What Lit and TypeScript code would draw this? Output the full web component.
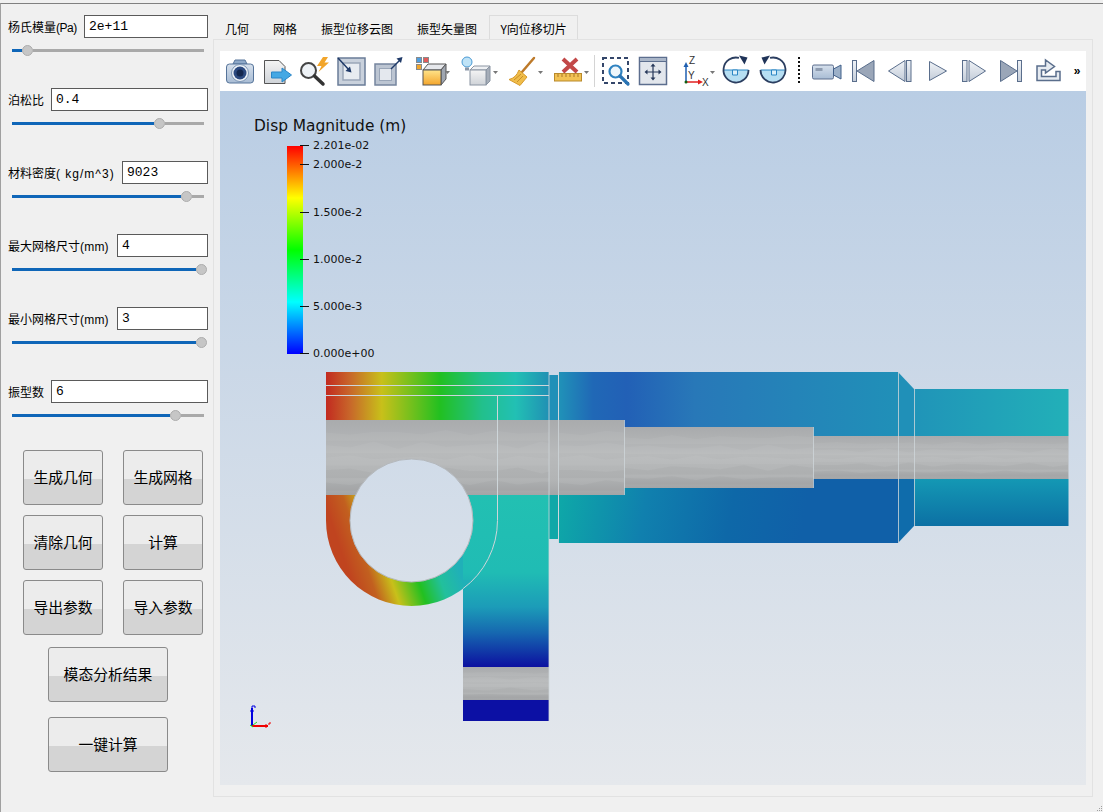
import { LitElement, css, html, svg } from "lit";
import { customElement } from "lit/decorators.js";

interface Param {
  label: string;
  unit: string;
  // the latin part of the labels is not evenly spaced in the reference
  unitSpacing: number;
  value: string;
  inputWidth: number;
  // slider thumb centre, measured from the left end of the 192px track
  thumb: number;
}

const PARAMS: Param[] = [
  { label: "杨氏模量", unit: "(Pa)", unitSpacing: -0.5, value: "2e+11", inputWidth: 124, thumb: 15 },
  { label: "泊松比", unit: "", unitSpacing: 0, value: "0.4", inputWidth: 157, thumb: 147 },
  { label: "材料密度", unit: "( kg/m^3)", unitSpacing: 1, value: "9023", inputWidth: 86, thumb: 174 },
  { label: "最大网格尺寸", unit: "(mm)", unitSpacing: 0.2, value: "4", inputWidth: 91, thumb: 189 },
  { label: "最小网格尺寸", unit: "(mm)", unitSpacing: 0.2, value: "3", inputWidth: 91, thumb: 189 },
  { label: "振型数", unit: "", unitSpacing: 0, value: "6", inputWidth: 157, thumb: 163 },
];

const TABS = ["几何", "网格", "振型位移云图", "振型矢量图", "Y向位移切片"];

const caret = svg`<path d="M38 20h5l-2.500 3z" fill="#777" />`;
const steel = "url(#steel)";
const line = "#5a6e8c";

const cwIcon = svg`
  <path d="M5.500 19A12.500 12.500 0 0 0 30.500 19Z" fill="#b6def2" />
  <path d="M5.500 19H30.500" stroke="#2a86c4" />
  <path d="M14.500 19h5v5h-5z" fill="#dcf0fa" stroke="#2a86c4" />
  <path d="M30.500 19A12.500 12.500 0 1 1 21 6.900" fill="none" stroke="#2b3e60" stroke-width="1.800" />
  <path d="M21 4.500L29.500 6.500L26.500 13.500Z" fill="#1f3358" />`;

const TOOLS: { w: number; icon: unknown }[] = [
  {
    w: 37,
    icon: svg`
      <path d="M11 13l2-4h10l2 4z" fill="#8fa9c8" stroke="#56749a" />
      <rect x="4.500" y="13" width="27" height="19" rx="3" fill="url(#pale)" stroke="#56749a" />
      <circle cx="18" cy="22" r="8.500" fill="#eef3f8" stroke="#7d96b5" />
      <circle cx="18" cy="22" r="6.500" fill="#2c4a80" />
      <circle cx="18" cy="22" r="3.500" fill="#14284f" />`,
  },
  {
    w: 37,
    icon: svg`
      <path d="M5.500 9.500H20L26 15.500V32.500H5.500Z" fill="url(#sheet)" stroke="#555" />
      <path d="M12.500 21H23V17L32.500 24L23 31V27H12.500Z" fill="#45a8e4" stroke="#2b86c8" />`,
  },
  {
    w: 37,
    icon: svg`
      <circle cx="12.500" cy="19.500" r="7.500" fill="#eef2f6" stroke="#444" stroke-width="2" />
      <path d="M18.500 25L27 33" stroke="#333" stroke-width="3.500" stroke-linecap="round" />
      <path d="M27 6L21 15H25.500L22.500 21L33 11.500H28.500L32 6Z" fill="#f2a52a" />`,
  },
  {
    w: 37,
    icon: svg`
      <rect x="5" y="7" width="27" height="27" fill="#c9d1dc" stroke="#6a7c98" stroke-width="1.500" />
      <rect x="10" y="12" width="17" height="17" fill="#e8ecf1" stroke="#9aa6b8" stroke-width="1.500" />
      <path d="M5 7L17 20" stroke="#1f3a68" stroke-width="1.500" />
      <path d="M18.500 21.500l-6-1.500 4.500-4.500z" fill="#1f3a68" />`,
  },
  {
    w: 37,
    icon: svg`
      <rect x="5" y="13" width="21" height="21" fill="#bcc5d2" stroke="#76859e" stroke-width="1.500" />
      <rect x="9.500" y="17.500" width="12" height="12" fill="#e4e8ee" stroke="#9aa6b8" />
      <path d="M21 18L30 9" stroke="#1f3a68" stroke-width="1.500" />
      <path d="M32.500 6l-1.500 6-4.500-4.500z" fill="#1f3a68" />`,
  },
  {
    w: 48,
    icon: svg`
      <rect x="9.500" y="6.500" width="5" height="5" fill="#4f9fe0" stroke="#8a8a8a" />
      <rect x="16.500" y="6.500" width="5" height="5" fill="#e25a5a" stroke="#8a8a8a" />
      <rect x="9.500" y="13.500" width="5" height="5" fill="#f2a62c" stroke="#8a8a8a" />
      <path d="M16 19l5-6h18l-5 6z" fill="#e6e8ec" stroke="#555" />
      <path d="M34 19l5-6v15l-5 6z" fill="#9fa6b0" stroke="#555" />
      <rect x="16" y="19" width="18" height="15" fill="url(#amber)" stroke="#555" />
      ${caret}`,
  },
  {
    w: 45,
    icon: svg`
      <circle cx="12" cy="11" r="5" fill="#bfe3f7" stroke="#4a9ad4" />
      <path d="M10 16.500h4v3h-4z" fill="#8a97a8" />
      <path d="M15 19l4-4h16l-4 4z" fill="#eef0f3" stroke="#8a94a2" />
      <path d="M31 19l4-4v15l-4 4z" fill="#a5adb8" stroke="#8a94a2" />
      <rect x="15" y="19" width="16" height="15" fill="url(#sheet)" stroke="#8a94a2" />
      ${caret}`,
  },
  {
    w: 46,
    icon: svg`
      <path d="M34 7L22 21" stroke="#bd7a2a" stroke-width="2.500" stroke-linecap="round" />
      <path d="M19 19L27 26L20 34.500L9 28.500Q16 27 19 19Z" fill="#f0bd4a" stroke="#d69a2e" />
      <path d="M21 23L14 29M23 25L17 31" stroke="#c98f28" />
      ${caret}`,
  },
  {
    w: 46,
    icon: svg`
      <path d="M17 8L31 21M31 8L17 21" stroke="#c24848" stroke-width="4" />
      <rect x="8.500" y="22.500" width="27" height="7.500" fill="#f2c253" stroke="#b98a2c" />
      <path d="M12 23v3M16 23v3M20 23v3M24 23v3M28 23v3M32 23v3" stroke="#a9782a" />
      ${caret}`,
  },
  { w: 4, icon: svg`<path d="M2.500 4V36" stroke="#d4d4d4" />` },
  {
    w: 38,
    icon: svg`
      <rect x="7" y="7" width="25" height="25" fill="none" stroke="#34466a" stroke-width="2" stroke-dasharray="4 3" />
      <circle cx="19.500" cy="20.500" r="6" fill="#eef6fb" stroke="#2f82c0" stroke-width="2.200" />
      <path d="M24 25L32 33" stroke="#2a74b4" stroke-width="3.200" stroke-linecap="round" />`,
  },
  {
    w: 38,
    icon: svg`
      <rect x="5.500" y="6.500" width="27" height="27" fill="#e2e6ec" stroke="#5c6e8e" stroke-width="1.500" />
      <rect x="5.500" y="6.500" width="27" height="4" fill="#aab6c8" stroke="#5c6e8e" />
      <path d="M19 14v14M12 21h14" stroke="#26385a" stroke-width="1.200" />
      <path d="M19 12.500l-2.500 3h5zM19 29.500l-2.500-3h5zM10.500 21l3-2.500v5zM27.500 21l-3-2.500v5z" fill="#26385a" />`,
  },
  {
    w: 46,
    icon: svg`
      <path d="M14 31V13" stroke="#1f5fb0" stroke-width="1.500" />
      <path d="M14 11l-2.500 5h5z" fill="#1f5fb0" />
      <path d="M14 31H28" stroke="#e02020" stroke-width="1.500" />
      <path d="M31 31l-5-2.500v5z" fill="#e02020" />
      <circle cx="14" cy="31" r="1.500" fill="#106010" />
      <text x="17" y="13" class="axis">Z</text>
      <text x="16" y="28" class="axis">Y</text>
      <text x="30" y="35" class="axis">X</text>
      ${caret}`,
  },
  { w: 37, icon: cwIcon },
  { w: 37, icon: svg`<g transform="translate(36 0) scale(-1 1)">${cwIcon}</g>` },
  { w: 14, icon: svg`<path d="M7 6V34" stroke="#111" stroke-width="2" stroke-dasharray="2 2" />` },
  {
    w: 40,
    icon: svg`
      <rect x="6.500" y="14" width="21" height="14" rx="1.500" fill="url(#pale)" stroke="#5c6e8e" />
      <rect x="9.500" y="17" width="7" height="3" fill="#8e9cb0" />
      <path d="M27.500 18L35 14V28L27.500 24Z" fill="#9cb0c8" stroke="#41608a" />`,
  },
  {
    w: 36,
    icon: svg`
      <rect x="6.500" y="9.500" width="4" height="21" fill="${steel}" stroke="${line}" />
      <path d="M28 9.500V30.500L11 20Z" fill="#9aa6b8" stroke="${line}" />`,
  },
  {
    w: 36,
    icon: svg`
      <path d="M23 9.500V30.500L6.500 20Z" fill="${steel}" stroke="${line}" />
      <rect x="24.500" y="9.500" width="4.500" height="21" fill="${steel}" stroke="${line}" />`,
  },
  { w: 38, icon: svg`<path d="M11.500 10.500V29.500L28.500 20Z" fill="${steel}" stroke="${line}" />` },
  {
    w: 36,
    icon: svg`
      <rect x="6.500" y="9.500" width="4.500" height="21" fill="${steel}" stroke="${line}" />
      <path d="M13 9.500V30.500L29.500 20Z" fill="${steel}" stroke="${line}" />`,
  },
  {
    w: 38,
    icon: svg`
      <path d="M8.500 9.500V30.500L25 20Z" fill="#9aa6b8" stroke="${line}" />
      <rect x="25.500" y="9.500" width="4" height="21" fill="${steel}" stroke="${line}" />`,
  },
  {
    w: 38,
    icon: svg`
      <path d="M7 29.500V15H15.500V9L24.500 15.500L15.500 22V19H11.500V25.500H26V20.500H30V29.500Z" fill="#e6ebf1" stroke="${line}" stroke-width="1.500" />`,
  },
];

// a few pale zigzag bands, stands in for the mesh facets on the cut section
function facets(x0: number, x1: number, y0: number, y1: number) {
  const rows = 5;
  const out = [];
  for (let r = 0; r < rows; r++) {
    const base = y0 + ((y1 - y0) * (r + 1)) / (rows + 1);
    const amp = (y1 - y0) * (r % 2 ? 0.05 : 0.035);
    let top = `M${x0} ${base}`;
    for (let x = x0 + 24; x < x1; x += 24) {
      const w = Math.sin(x * 0.11 + r * 1.7) * amp;
      top += `L${x} ${(base + w).toFixed(1)}`;
    }
    top += `L${x1} ${base}V${base + (y1 - y0) / 9}H${x0}Z`;
    out.push(
      svg`<path d=${top} fill=${r < 3 ? "#fff" : "#000"} opacity=${r < 3 ? 0.045 : 0.025} />`
    );
  }
  return out;
}

const TICKS: [number, string][] = [
  [145, "2.201e-02"],
  [164, "2.000e-2"],
  [212, "1.500e-2"],
  [259, "1.000e-2"],
  [306, "5.000e-3"],
  [353, "0.000e+00"],
];

@customElement("app-root")
export class AppRoot extends LitElement {
  static styles = css`
    :host {
      display: block;
      width: 1103px;
      height: 812px;
      background: #f0f0f0;
      font-family: "Liberation Sans", "Noto Sans CJK SC", sans-serif;
      color: #000;
      overflow: hidden;
    }
    .window {
      box-sizing: border-box;
      display: flex;
      height: 809px;
      margin-top: 3px;
      border-top: 1px solid #808080;
      border-left: 1px solid #a0a0a0;
    }
    .side {
      box-sizing: border-box;
      width: 212px;
      padding: 11px 5px 0 7px;
      flex: none;
    }
    .field {
      height: 50px;
      margin-bottom: 23px;
    }
    .row {
      display: flex;
      align-items: center;
      height: 23px;
    }
    .row label {
      flex: 1;
      font-size: 12px;
      white-space: nowrap;
    }
    .row input {
      box-sizing: border-box;
      height: 23px;
      border: 1px solid #5a5a5a;
      outline: none;
      padding: 0 0 0 4px;
      background: #fff;
      font: 13px "Liberation Mono", monospace;
      color: #000;
    }
    .slider {
      display: flex;
      align-items: center;
      width: 192px;
      height: 11px;
      margin: 7px 0 0 4px;
    }
    .fill {
      height: 3px;
      background: #0f66b8;
      flex: none;
    }
    .thumb {
      box-sizing: border-box;
      width: 11px;
      height: 11px;
      border-radius: 50%;
      background: #c6c6c6;
      border: 1px solid #adadad;
      flex: none;
    }
    .rest {
      height: 3px;
      background: #a9a9a9;
      flex: 1;
    }
    .buttons {
      display: grid;
      grid-template-columns: 80px 80px;
      column-gap: 20px;
      row-gap: 10px;
      margin: -3px 0 0 15px;
    }
    .stack {
      display: flex;
      flex-direction: column;
      gap: 15px;
      margin: 12px 0 0 40px;
    }
    button {
      box-sizing: border-box;
      height: 55px;
      padding: 0 0 2px;
      border: 1px solid #8a8a8a;
      border-radius: 3px;
      background: linear-gradient(#ececec 0 52%, #d4d4d4 52%);
      font: 14.8px "Noto Sans CJK SC", sans-serif;
      color: #000;
    }
    .stack button {
      width: 120px;
    }
    .main {
      width: 880px;
      padding-top: 11px;
      flex: none;
    }
    .tabs {
      display: flex;
      height: 24px;
      font: 12px "Noto Sans CJK SC", sans-serif;
    }
    .tab {
      padding: 0 12px;
      line-height: 27px;
      white-space: nowrap;
    }
    .tab.active {
      box-sizing: border-box;
      width: 89px;
      padding: 0;
      text-align: center;
      border: 1px solid #dcdcdc;
      border-bottom: none;
      line-height: 25px;
    }
    .pane {
      box-sizing: border-box;
      height: 758px;
      padding: 11px 6px;
      border: 1px solid #e2e2e2;
      display: flex;
      flex-direction: column;
    }
    .toolbar {
      display: flex;
      align-items: center;
      height: 40px;
      padding-left: 2px;
      background: #fff;
      flex: none;
    }
    .toolbar svg {
      display: block;
      flex: none;
    }
    .axis {
      font: 10px "Liberation Sans", sans-serif;
      fill: #333;
    }
    .more {
      width: 18px;
      text-align: center;
      font: bold 12px "Liberation Sans", sans-serif;
    }
    .view {
      flex: 1;
      background: linear-gradient(#b9cde4, #e5e8ec);
    }
    .view svg {
      display: block;
    }
    .title {
      font: 15.4px "DejaVu Sans", sans-serif;
      fill: #111;
    }
    .tick {
      font: 11px "DejaVu Sans", sans-serif;
      fill: #111;
    }
    .grip {
      position: absolute;
      left: 1096px;
      top: 805px;
    }
  `;

  private _renderParam(p: Param) {
    return html`
      <div class="field">
        <div class="row">
          <label>${p.label}<span style="letter-spacing:${p.unitSpacing}px">${p.unit}</span></label>
          <input style="width:${p.inputWidth}px" .value=${p.value} />
        </div>
        <div class="slider">
          <div class="fill" style="width:${p.thumb - 5.5}px"></div>
          <div class="thumb"></div>
          <div class="rest"></div>
        </div>
      </div>
    `;
  }

  private _renderToolbar() {
    return html`
      <div class="toolbar">
        <svg width="0" height="0">
          <defs>
            <linearGradient id="steel" x1="0" y1="0" x2="0" y2="1">
              <stop offset="0" stop-color="#f0f3f7" />
              <stop offset="1" stop-color="#c3ccd8" />
            </linearGradient>
            <linearGradient id="pale" x1="0" y1="0" x2="0" y2="1">
              <stop offset="0" stop-color="#d6e0ec" />
              <stop offset="1" stop-color="#a8bcd4" />
            </linearGradient>
            <linearGradient id="sheet" x1="0" y1="0" x2="0" y2="1">
              <stop offset="0" stop-color="#f4f4f4" />
              <stop offset="1" stop-color="#cfd3d8" />
            </linearGradient>
            <linearGradient id="amber" x1="0" y1="0" x2="0" y2="1">
              <stop offset="0" stop-color="#ffe48a" />
              <stop offset="1" stop-color="#f3a52c" />
            </linearGradient>
          </defs>
        </svg>
        ${TOOLS.map(
          (t) => html`<svg width=${t.w} height="40" viewBox="0 0 ${t.w} 40">${t.icon}</svg>`
        )}
        <span class="more">»</span>
      </div>
    `;
  }

  // the model view, drawn in page coordinates
  private _renderView() {
    const edge = "#ced6da";
    return html`
      <svg width="866" height="694" viewBox="220 91 866 694">
        <defs>
          <linearGradient id="rainbow" x1="0" y1="0" x2="0" y2="1">
            <stop offset="0" stop-color="#f00" />
            <stop offset="0.25" stop-color="#ff0" />
            <stop offset="0.5" stop-color="#0f0" />
            <stop offset="0.75" stop-color="#0ff" />
            <stop offset="1" stop-color="#00f" />
          </linearGradient>
          <linearGradient id="arm" gradientUnits="userSpaceOnUse" x1="326" y1="0" x2="549" y2="0">
            <stop offset="0" stop-color="#c22a20" />
            <stop offset="0.11" stop-color="#c8682a" />
            <stop offset="0.25" stop-color="#c8c01a" />
            <stop offset="0.51" stop-color="#22c020" />
            <stop offset="0.7" stop-color="#22c08c" />
            <stop offset="0.85" stop-color="#22c0b4" />
            <stop offset="1" stop-color="#2090b4" />
          </linearGradient>
          <linearGradient id="ring" gradientUnits="userSpaceOnUse" x1="360" y1="606" x2="460" y2="572">
            <stop offset="0" stop-color="#c0441f" />
            <stop offset="0.18" stop-color="#c2601f" />
            <stop offset="0.36" stop-color="#c8c01a" />
            <stop offset="0.6" stop-color="#22c020" />
            <stop offset="0.8" stop-color="#22c09c" />
            <stop offset="1" stop-color="#20b0b8" />
          </linearGradient>
          <linearGradient id="leg" gradientUnits="userSpaceOnUse" x1="0" y1="495" x2="0" y2="667">
            <stop offset="0" stop-color="#22c0b2" />
            <stop offset="0.45" stop-color="#20bcb4" />
            <stop offset="0.65" stop-color="#1c9cb8" />
            <stop offset="0.8" stop-color="#1668b0" />
            <stop offset="1" stop-color="#0c10a0" />
          </linearGradient>
          <linearGradient id="bodyTop" gradientUnits="userSpaceOnUse" x1="559" y1="0" x2="898" y2="0">
            <stop offset="0" stop-color="#2092b8" />
            <stop offset="0.1" stop-color="#2068b6" />
            <stop offset="0.2" stop-color="#2260b6" />
            <stop offset="0.4" stop-color="#2878b8" />
            <stop offset="1" stop-color="#2090b8" />
          </linearGradient>
          <linearGradient id="bodyBottom" gradientUnits="userSpaceOnUse" x1="559" y1="500" x2="800" y2="543">
            <stop offset="0" stop-color="#0ea8a8" />
            <stop offset="0.35" stop-color="#1080ae" />
            <stop offset="0.7" stop-color="#0e68a8" />
            <stop offset="1" stop-color="#1060a8" />
          </linearGradient>
          <linearGradient id="tipTop" gradientUnits="userSpaceOnUse" x1="914" y1="0" x2="1068" y2="0">
            <stop offset="0" stop-color="#2094b8" />
            <stop offset="1" stop-color="#22b0b8" />
          </linearGradient>
          <linearGradient id="tipBottom" gradientUnits="userSpaceOnUse" x1="0" y1="479" x2="0" y2="526">
            <stop offset="0" stop-color="#1498b4" />
            <stop offset="1" stop-color="#0c70a4" />
          </linearGradient>
          <linearGradient id="cut" x1="0" y1="0" x2="0" y2="1">
            <stop offset="0" stop-color="#a9abad" />
            <stop offset="0.45" stop-color="#b8babb" />
            <stop offset="0.8" stop-color="#b2b4b5" />
            <stop offset="1" stop-color="#a3a5a7" />
          </linearGradient>
          <mask id="hole" maskUnits="userSpaceOnUse" x="220" y="91" width="866" height="694">
            <rect x="220" y="91" width="866" height="694" fill="#fff" />
            <circle cx="411.500" cy="520.500" r="61.500" fill="#000" />
          </mask>
        </defs>

        <text x="254" y="131" class="title">Disp Magnitude (m)</text>
        <rect x="287" y="146" width="16" height="208" fill="url(#rainbow)" />
        ${TICKS.map(
          ([y, t]) => svg`
            <path d="M300 ${y + 0.5}H309" stroke="#111" />
            <text x="313" y=${y + 4} class="tick">${t}</text>
          `
        )}

        <g mask="url(#hole)">
          <rect x="463" y="495" width="86" height="172" fill="url(#leg)" />
          <path d="M326 495V520.500A85.500 85.500 0 0 0 497 520.500V495Z" fill="url(#ring)" />
          <path d="M463 495H549V580H463Z" fill="url(#leg)" />
          <rect x="326" y="372" width="223" height="48" fill="url(#arm)" />
          <rect x="326" y="420" width="298" height="75" fill="url(#cut)" />
          ${facets(326, 624, 420, 495)}
        </g>
        <circle cx="411.500" cy="520.500" r="61.500" fill="none" stroke="#b4b8bc" />
        <path d="M326 385.500H549M326 395.500H549M497.500 395V520.500A85.500 85.500 0 0 1 463 588.700" fill="none" stroke=${edge} />

        <rect x="463" y="667" width="86" height="33" fill="url(#cut)" />
        ${facets(463, 549, 667, 700)}
        <rect x="463" y="700" width="86" height="21" fill="#0c10a4" />

        <rect x="549" y="375" width="9" height="45" fill="#2090b8" />
        <rect x="549" y="495" width="9" height="44" fill="#10a8a8" />

        <rect x="559" y="372" width="339" height="64" fill="url(#bodyTop)" />
        <rect x="559" y="479" width="339" height="64" fill="url(#bodyBottom)" />
        <path d="M898 372L914 389V436H898Z" fill="#2090b8" />
        <path d="M898 479H914V526L898 543Z" fill="#0f6cab" />
        <rect x="914" y="389" width="154.500" height="47" fill="url(#tipTop)" />
        <rect x="914" y="479" width="154.500" height="47" fill="url(#tipBottom)" />

        <rect x="624" y="427" width="189" height="61" fill="url(#cut)" />
        ${facets(624, 813, 427, 488)}
        <rect x="813" y="436" width="255.500" height="43" fill="url(#cut)" />
        ${facets(813, 1068, 436, 479)}
        <path d="M558.500 420H624V495H558.500Z" fill="url(#cut)" />
        ${facets(558, 624, 420, 495)}
        <rect x="549" y="420" width="10" height="75" fill="url(#cut)" />

        <path
          d="M549 372V721M558.500 372V543M624.500 420V495M813.500 427V488M898.500 372V543M914.500 389V526"
          fill="none"
          stroke=${edge}
          opacity="0.8"
        />

        <path d="M252 726V708" stroke="#0000e0" stroke-width="2" />
        <path d="M250 711H254M252 708V706H255V708" fill="none" stroke="#0000e0" />
        <path d="M252 726H268" stroke="#f00000" stroke-width="2" />
        <path d="M266 724V728M269 725V723H271" fill="none" stroke="#f00000" />
        <path d="M250 725L253 727M253 725L257 722" fill="none" stroke="#20e020" />
      </svg>
    `;
  }

  render() {
    return html`
      <div class="window">
        <div class="side">
          ${PARAMS.map((p) => this._renderParam(p))}
          <div class="buttons">
            <button>生成几何</button>
            <button>生成网格</button>
            <button>清除几何</button>
            <button>计算</button>
            <button>导出参数</button>
            <button>导入参数</button>
          </div>
          <div class="stack">
            <button>模态分析结果</button>
            <button>一键计算</button>
          </div>
        </div>
        <div class="main">
          <div class="tabs">
            ${TABS.map(
              (t, i) => html`<div class="tab ${i === TABS.length - 1 ? "active" : ""}">${t}</div>`
            )}
          </div>
          <div class="pane">
            ${this._renderToolbar()}
            <div class="view">${this._renderView()}</div>
          </div>
        </div>
      </div>
      <svg class="grip" width="7" height="7" viewBox="0 0 7 7">
        <path d="M5 1h1v1H5zM3 3h1v1H3zM5 3h1v1H5zM1 5h1v1H1zM3 5h1v1H3zM5 5h1v1H5z" fill="#a0a0a0" />
      </svg>
    `;
  }
}
